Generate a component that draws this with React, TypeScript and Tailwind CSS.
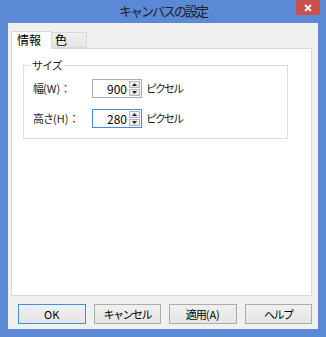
import React from 'react';

const font = { fontFamily: '"Noto Sans CJK JP", "Noto Sans", sans-serif' };

const Spinner = () => (
  <div className="flex flex-col w-[13px] h-full p-[1px] gap-[1px] bg-white">
    <div className="flex-1 flex items-center justify-center border border-[#b5b5b5] bg-gradient-to-b from-[#f6f6f6] to-[#e2e2e2]">
      <svg width="5" height="3" viewBox="0 0 5 3"><path d="M0 3 L2.5 0 L5 3 Z" fill="#222" /></svg>
    </div>
    <div className="flex-1 flex items-center justify-center border border-[#b5b5b5] bg-gradient-to-b from-[#f6f6f6] to-[#e2e2e2]">
      <svg width="5" height="3" viewBox="0 0 5 3"><path d="M0 0 L2.5 3 L5 0 Z" fill="#222" /></svg>
    </div>
  </div>
);

const NumField = ({ kanji, key2, value, focused }: { kanji: string; key2: string; value: string; focused?: boolean }) => (
  <div className="flex items-center h-[19px]">
    <span className="w-[68px] pl-[9px] whitespace-nowrap text-[11px] text-[#1e1e1e]">
      <span className="tracking-[-1px]">{kanji}</span>({key2})：
    </span>
    <div className={`flex h-[19px] w-[50px] border bg-white ${focused ? 'border-[#3c8ee6]' : 'border-[#acacac]'}`}>
      <div className="flex-1 text-right pr-[1px] text-[12px] leading-[17px] text-black">{value}</div>
      <Spinner />
    </div>
    <span className="ml-[4px] text-[11px] tracking-[-2px] text-[#1e1e1e]">ピクセル</span>
  </div>
);

const Btn = ({ children, primary }: { children: React.ReactNode; primary?: boolean }) => (
  <button
    className={`w-[68px] h-[20px] text-[11px] leading-[18px] text-black border bg-gradient-to-b from-[#f0f0f0] to-[#e5e5e5] ${primary ? 'border-[#3c8ee6]' : 'border-[#acacac]'}`}
    style={font}
  >
    {children}
  </button>
);

export default function App() {
  return (
    <div className="w-[326px] h-[337px] bg-[#5b89d6] flex flex-col" style={font}>
      <div className="relative h-[23px] flex items-center justify-center">
        <span className="text-[13px] tracking-[-2px] text-[#1f1f1f] -mt-[1px]">キャンバスの設定</span>
        <div className="absolute right-[6px] top-0 w-[24px] h-[15px] bg-[#c9504c] flex items-center justify-center">
          <svg width="8" height="8" viewBox="0 0 8 8"><path d="M1 1 L7 7 M7 1 L1 7" stroke="#fff" strokeWidth="1.8" /></svg>
        </div>
      </div>
      <div className="mx-[8px] mb-[8px] flex-1 bg-[#f0f0f0] flex flex-col pl-[3px] pr-[6px] pt-[8px]">
        <div className="flex items-end h-[18px] relative z-10">
          <div className="w-[41px] h-[18px] bg-white border border-b-0 border-[#d9d9d9] text-[12px] leading-[16px] pl-[5px] text-black">情報</div>
          <div className="w-[35px] h-[16px] bg-gradient-to-b from-[#f0f0f0] to-[#e5e5e5] border border-l-0 border-[#d9d9d9] text-[12px] leading-[14px] pl-[3px] text-black mb-[1px]">色</div>
        </div>
        <div className="h-[248px] -mt-[1px] bg-white border border-[#d9d9d9] pl-[11px] pt-[16px]">
          <div className="relative w-[265px] h-[74px] border border-[#dcdcdc] pt-[13px] flex flex-col gap-[11px]">
            <span className="absolute -top-[9px] left-[6px] bg-white px-[2px] text-[11px] tracking-[-1px] text-[#1e1e1e]">サイズ</span>
            <NumField kanji="幅" key2="W" value="900" />
            <NumField kanji="高さ" key2="H" value="280" focused />
          </div>
        </div>
        <div className="flex gap-[8px] mt-[8px] pl-[7px]">
          <Btn primary>OK</Btn>
          <Btn><span className="tracking-[-1.5px]">キャンセル</span></Btn>
          <Btn><span className="tracking-[-1px]">適用</span>(A)</Btn>
          <Btn><span className="tracking-[-1.5px]">ヘルプ</span></Btn>
        </div>
      </div>
    </div>
  );
}
